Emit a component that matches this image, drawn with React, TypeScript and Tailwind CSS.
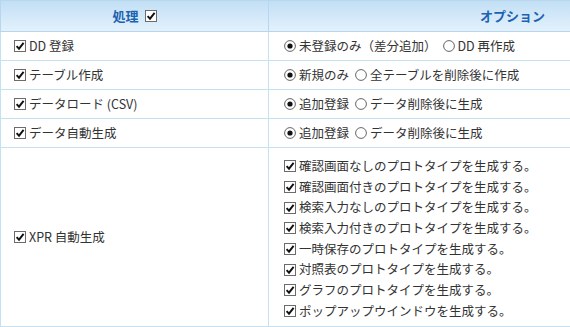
import React from 'react'

const font = { fontFamily: '"Noto Sans CJK JP", "Noto Sans", sans-serif' }

function Check() {
  return (
    <svg width="12" height="12" viewBox="0 0 12 12" className="shrink-0">
      <rect x="0.5" y="0.5" width="11" height="11" fill="#fff" stroke="#6b6b6b" />
      <path d="M2.6 6.2 L5 8.7 L9.6 2.8" fill="none" stroke="#111" strokeWidth="1.9" />
    </svg>
  )
}

function Radio({ on }: { on?: boolean }) {
  return (
    <svg width="12" height="12" viewBox="0 0 12 12" className="shrink-0">
      <circle cx="6" cy="6" r="5.4" fill="#fff" stroke="#555" strokeWidth="0.9" />
      {on && <circle cx="6" cy="6" r="2.6" fill="#111" />}
    </svg>
  )
}

const rows: { label: string; options: [string, string] }[] = [
  { label: 'DD 登録', options: ['未登録のみ（差分追加）', 'DD 再作成'] },
  { label: 'テーブル作成', options: ['新規のみ', '全テーブルを削除後に作成'] },
  { label: 'データロード (CSV)', options: ['追加登録', 'データ削除後に生成'] },
  { label: 'データ自動生成', options: ['追加登録', 'データ削除後に生成'] },
]

const xpr = [
  '確認画面なしのプロトタイプを生成する。',
  '確認画面付きのプロトタイプを生成する。',
  '検索入力なしのプロトタイプを生成する。',
  '検索入力付きのプロトタイプを生成する。',
  '一時保存のプロトタイプを生成する。',
  '対照表のプロトタイプを生成する。',
  'グラフのプロトタイプを生成する。',
  'ポップアップウインドウを生成する。',
]

export default function App() {
  return (
    <div className="w-[570px] h-[327px] overflow-hidden bg-white" style={font}>
      <table className="border-collapse w-[756px] text-[12.5px] text-[#333] table-fixed">
        <colgroup>
          <col className="w-[268px]" />
          <col className="w-[488px]" />
        </colgroup>
        <thead>
          <tr className="h-[31px] bg-gradient-to-b from-[#c2dff5] to-[#e4f2fc]">
            <th className="border border-[#b7d7ef] font-bold text-[13px] text-[#1d62b0]">
              <span className="inline-flex items-center gap-[6px]">
                処理 <Check />
              </span>
            </th>
            <th className="border border-[#b7d7ef] font-bold text-[13px] text-[#1d62b0]">オプション</th>
          </tr>
        </thead>
        <tbody>
          {rows.map((r) => (
            <tr key={r.label} className="h-[29px]">
              <td className="border border-[#c4e0f3] pl-[13px]">
                <span className="flex items-center gap-[3px]">
                  <Check />
                  {r.label}
                </span>
              </td>
              <td className="border border-[#c4e0f3] pl-[15px]">
                <span className="flex items-center">
                  <Radio on />
                  <span className="ml-[3px] mr-[6px]">{r.options[0]}</span>
                  <Radio />
                  <span className="ml-[3px]">{r.options[1]}</span>
                </span>
              </td>
            </tr>
          ))}
          <tr className="h-[179px]">
            <td className="border border-[#c4e0f3] pl-[13px]">
              <span className="flex items-center gap-[3px]">
                <Check />
                XPR 自動生成
              </span>
            </td>
            <td className="border border-[#c4e0f3] pl-[15px] pt-[8px] pb-[4px] align-top">
              {xpr.map((t) => (
                <div key={t} className="flex items-center gap-[3px] h-[20.7px]">
                  <Check />
                  {t}
                </div>
              ))}
            </td>
          </tr>
        </tbody>
      </table>
    </div>
  )
}
